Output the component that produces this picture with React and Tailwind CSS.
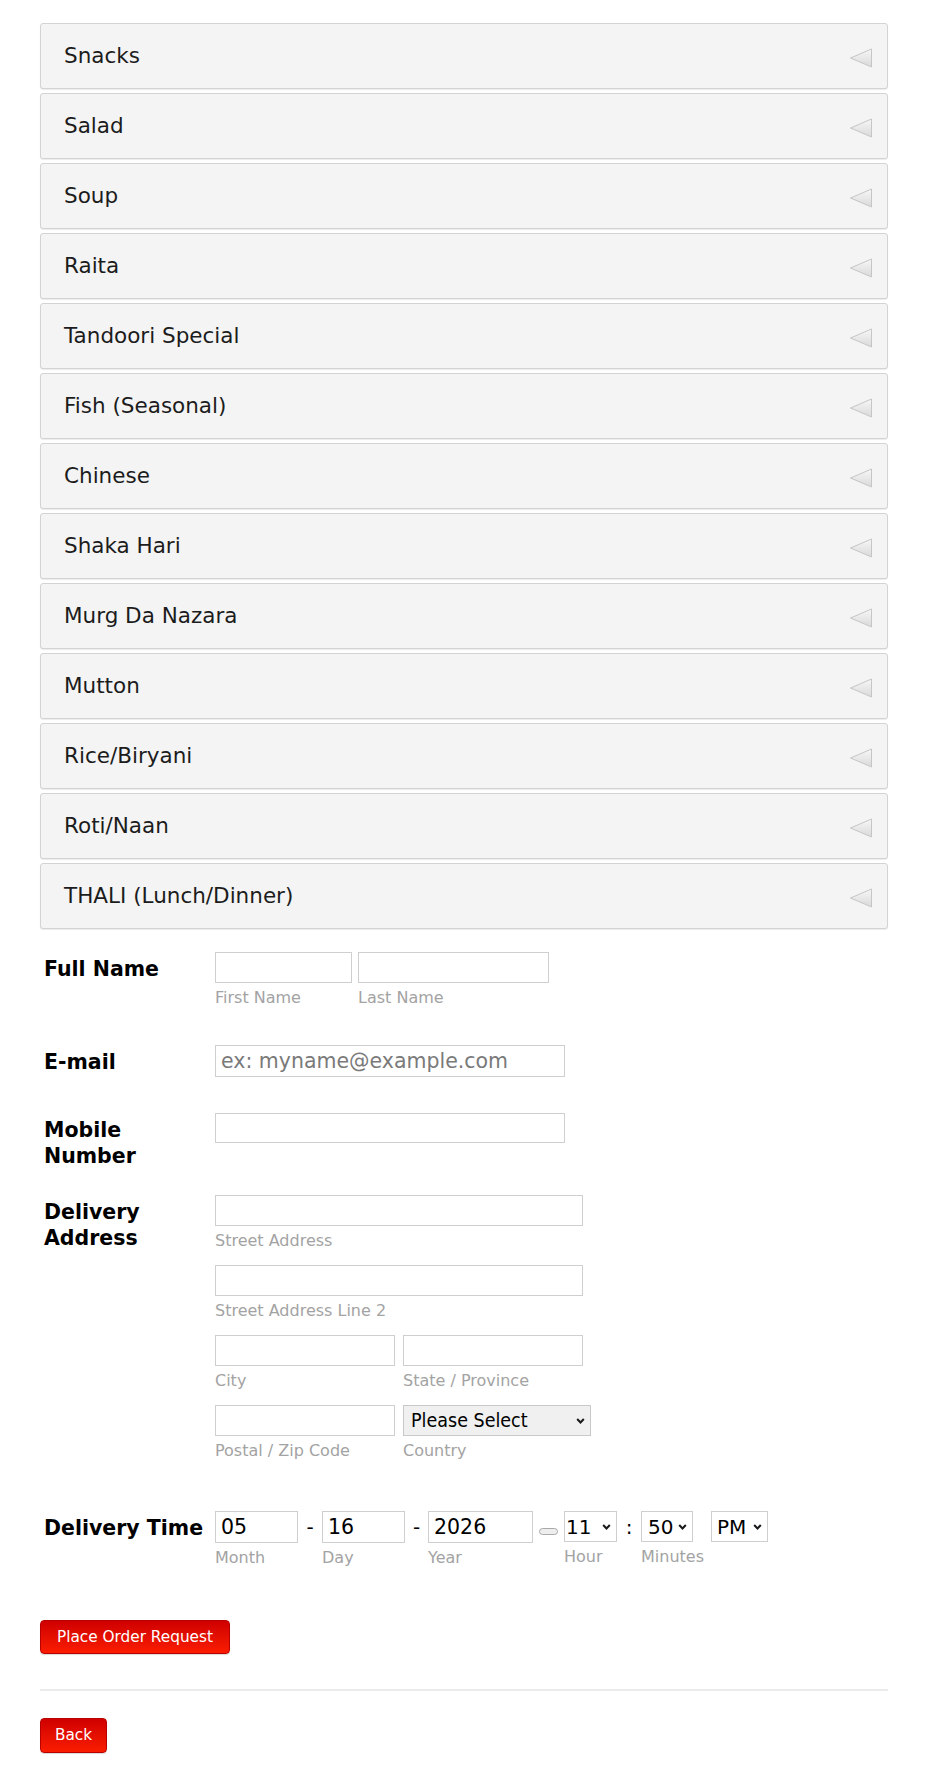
import React from 'react';

const categories = [
  'Snacks',
  'Salad',
  'Soup',
  'Raita',
  'Tandoori Special',
  'Fish (Seasonal)',
  'Chinese',
  'Shaka Hari',
  'Murg Da Nazara',
  'Mutton',
  'Rice/Biryani',
  'Roti/Naan',
  'THALI (Lunch/Dinner)',
];

const Arrow = () => (
  <svg width="24" height="20" viewBox="0 0 24 20" className="mt-[4px]">
    <defs>
      <linearGradient id="arrowFill" x1="0" y1="0" x2="0" y2="1">
        <stop offset="0" stopColor="#f7f7f7" />
        <stop offset="1" stopColor="#d9d9d9" />
      </linearGradient>
    </defs>
    <polygon points="22.5,1 22.5,19 1.5,10" fill="url(#arrowFill)" stroke="#c6c6c6" strokeWidth="1" strokeLinejoin="round" />
  </svg>
);

const Chevron = () => (
  <svg width="9" height="7" viewBox="0 0 9 7" className="pointer-events-none absolute right-[6px] top-1/2 -translate-y-1/2">
    <path d="M1.2 1.6l3.3 3.3 3.3-3.3" fill="none" stroke="#1a1a1a" strokeWidth="2.1" />
  </svg>
);

const SubLabel = ({ children }) => (
  <div className="mt-[5px] h-[20px] whitespace-nowrap text-[16px] leading-[20px] text-[#a3a3a3]">{children}</div>
);

const TextBox = ({ className = '', placeholder, value }) => (
  <input
    type="text"
    defaultValue={value}
    placeholder={placeholder}
    className={`block border border-[#cfcfcf] bg-white px-[5px] text-[20.5px] text-black outline-none placeholder:text-[#7a7a7a] ${className}`}
  />
);

const Field = ({ width, label, height = 'h-[31px]', placeholder, value }) => (
  <div className={width}>
    <TextBox className={`w-full ${height}`} placeholder={placeholder} value={value} />
    {label && <SubLabel>{label}</SubLabel>}
  </div>
);

const TimeSelect = ({ width, value, options, pad, label }) => (
  <div className={width}>
    <div className="relative">
      <select
        defaultValue={value}
        className={`block h-[31px] w-full appearance-none border border-[#cfcfcf] bg-white text-[20px] text-black outline-none ${pad}`}
      >
        {options.map((o) => (
          <option key={o}>{o}</option>
        ))}
      </select>
      <Chevron />
    </div>
    {label && <SubLabel>{label}</SubLabel>}
  </div>
);

const Label = ({ children }) => (
  <div className="w-[175px] shrink-0 pl-[4px] pr-[8px] pt-[4px] text-[20.5px] font-bold leading-[26px] text-black">
    {children}
  </div>
);

const Separator = ({ width, children }) => (
  <div className={`${width} flex h-[32px] shrink-0 items-center justify-center text-[20px] text-black`}>{children}</div>
);

export default function App() {
  const hours = ['1', '2', '3', '4', '5', '6', '7', '8', '9', '10', '11', '12'];
  const minutes = ['00', '10', '20', '30', '40', '50'];

  return (
    <div className="min-h-[1782px] bg-white pt-[23px] pb-[28px] font-['DejaVu_Sans',sans-serif]">
      <div className="ml-[40px] w-[848px]">
        {categories.map((name) => (
          <div
            key={name}
            className="mb-[4px] flex h-[66px] items-center justify-between rounded-[3px] border border-[#d3d3d3] bg-[#f4f4f4] pl-[23px] pr-[14px] shadow-[0_1px_1px_rgba(0,0,0,0.08)]"
          >
            <span className="text-[21.5px] text-[#1c1c1c]">{name}</span>
            <Arrow />
          </div>
        ))}

        {/* order form */}
        <div className="mt-[23px] flex items-start">
          <Label>Full Name</Label>
          <div className="flex gap-[6px]">
            <Field width="w-[137px]" label="First Name" />
            <Field width="w-[191px]" label="Last Name" />
          </div>
        </div>

        <div className="mt-[37px] flex items-start">
          <Label>E-mail</Label>
          <Field width="w-[350px]" height="h-[32px]" placeholder="ex: myname@example.com" />
        </div>

        <div className="mt-[36px] flex items-start">
          <Label>Mobile Number</Label>
          <Field width="w-[350px]" height="h-[30px]" />
        </div>

        <div className="mt-[26px] flex items-start">
          <Label>Delivery Address</Label>
          <div className="flex flex-col gap-[14px]">
            <Field width="w-[368px]" label="Street Address" />
            <Field width="w-[368px]" label="Street Address Line 2" />
            <div className="flex gap-[8px]">
              <Field width="w-[180px]" label="City" />
              <Field width="w-[180px]" label="State / Province" />
            </div>
            <div className="flex gap-[8px]">
              <Field width="w-[180px]" label="Postal / Zip Code" />
              <div className="w-[188px]">
                <div className="relative">
                  <select
                    defaultValue="Please Select"
                    className="block h-[31px] w-full appearance-none border border-[#c9c9c9] bg-[#f0f0f0] pl-[7px] font-['DejaVu_Sans_Condensed','DejaVu_Sans',sans-serif] text-[19.5px] text-black outline-none"
                  >
                    <option>Please Select</option>
                    <option>India</option>
                    <option>United States</option>
                  </select>
                  <Chevron />
                </div>
                <SubLabel>Country</SubLabel>
              </div>
            </div>
          </div>
        </div>

        <div className="mt-[50px] flex items-start">
          <Label>Delivery Time</Label>
          <div className="flex items-start">
            <Field width="w-[83px]" height="h-[32px]" value="05" label="Month" />
            <Separator width="w-[24px]">-</Separator>
            <Field width="w-[83px]" height="h-[32px]" value="16" label="Day" />
            <Separator width="w-[23px]">-</Separator>
            <Field width="w-[105px]" height="h-[32px]" value="2026" label="Year" />
            <div className="flex h-[32px] w-[31px] shrink-0 items-center justify-center pt-[8px]">
              <div className="h-[7px] w-[19px] rounded-full border border-[#a9a9a9] bg-[#eeeeee]" />
            </div>
            <TimeSelect width="w-[53px]" value="11" options={hours} pad="pl-[1px]" label="Hour" />
            <Separator width="w-[24px]">:</Separator>
            <TimeSelect width="w-[52px]" value="50" options={minutes} pad="pl-[6px]" label="Minutes" />
            <div className="w-[18px] shrink-0" />
            <TimeSelect width="w-[57px]" value="PM" options={['AM', 'PM']} pad="pl-[5px]" />
          </div>
        </div>

        <button
          type="button"
          className="mt-[52px] block h-[34px] rounded-[4px] border border-[#b80000] bg-gradient-to-b from-[#cf0000] to-[#fa1c00] px-[16px] text-[15.3px] text-white shadow-[0_1px_1px_rgba(0,0,0,0.15)]"
        >
          Place Order Request
        </button>

        <div className="mt-[35px] h-[2px] w-full bg-[#ebebeb]" />

        <button
          type="button"
          className="mt-[27px] block h-[35px] rounded-[4px] border border-[#b80000] bg-gradient-to-b from-[#cf0000] to-[#fa1c00] px-[14px] text-[15.3px] text-white shadow-[0_1px_1px_rgba(0,0,0,0.15)]"
        >
          Back
        </button>
      </div>
    </div>
  );
}
